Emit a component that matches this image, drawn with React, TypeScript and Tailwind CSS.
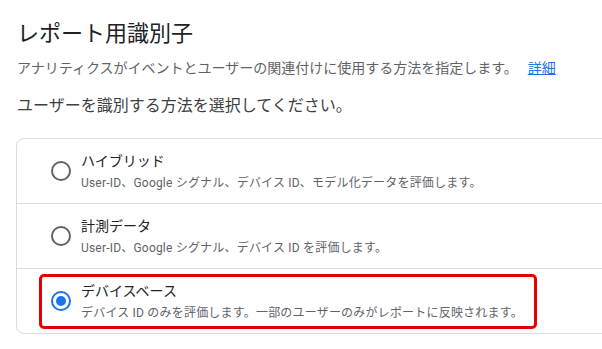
const options = [
  {
    title: 'ハイブリッド',
    desc: 'User-ID、Google シグナル、デバイス ID、モデル化データを評価します。',
    checked: false,
  },
  {
    title: '計測データ',
    desc: 'User-ID、Google シグナル、デバイス ID を評価します。',
    checked: false,
  },
  {
    title: 'デバイスベース',
    desc: 'デバイス ID のみを評価します。一部のユーザーのみがレポートに反映されます。',
    checked: true,
  },
];

function Radio({ checked }: { checked: boolean }) {
  return (
    <div
      className={
        checked
          ? 'flex h-[20px] w-[20px] shrink-0 items-center justify-center rounded-full border-2 border-[#1a73e8]'
          : 'flex h-[20px] w-[20px] shrink-0 items-center justify-center rounded-full border-2 border-[#5f6368]'
      }
    >
      {checked && <div className="h-[10px] w-[10px] rounded-full bg-[#1a73e8]" />}
    </div>
  );
}

export default function App() {
  return (
    <div
      className="h-[349px] w-[602px] overflow-hidden bg-white pl-[17px] pt-[20px] text-[#202124]"
      style={{ fontFamily: 'Roboto, "Noto Sans CJK JP", sans-serif' }}
    >
      <h1 className="text-[22px] leading-[28px] font-normal">レポート用識別子</h1>
      <p className="mt-[10px] text-[14px] leading-[20px] text-[#5f6368]">
        アナリティクスがイベントとユーザーの関連付けに使用する方法を指定します。
        <a className="ml-[10px] text-[#1a73e8] underline">詳細</a>
      </p>
      <p className="mt-[16px] text-[16px] leading-[24px] text-[#3c4043]">
        ユーザーを識別する方法を選択してください。
      </p>

      {/* Options card */}
      <div className="-ml-[1px] mt-[20px] w-[640px] rounded-[8px] border border-[#dadce0]">
        {options.map((o, i) => (
          <div
            key={o.title}
            className={
              i > 0
                ? 'relative flex h-[65px] items-center border-t border-[#dadce0] pl-[34px]'
                : 'relative flex h-[64px] items-center pl-[34px]'
            }
          >
            <Radio checked={o.checked} />
            <div className="ml-[10px]">
              <div className="text-[14px] leading-[20px] text-[#202124]">{o.title}</div>
              <div className="mt-[4px] text-[12px] leading-[16px] tracking-[0.2px] text-[#5f6368]">
                {o.desc}
              </div>
            </div>
            {o.checked && (
              <div className="absolute left-[22px] top-[5px] h-[55px] w-[498px] rounded-[5px] border-[3px] border-[#e50000]" />
            )}
          </div>
        ))}
      </div>
    </div>
  );
}
